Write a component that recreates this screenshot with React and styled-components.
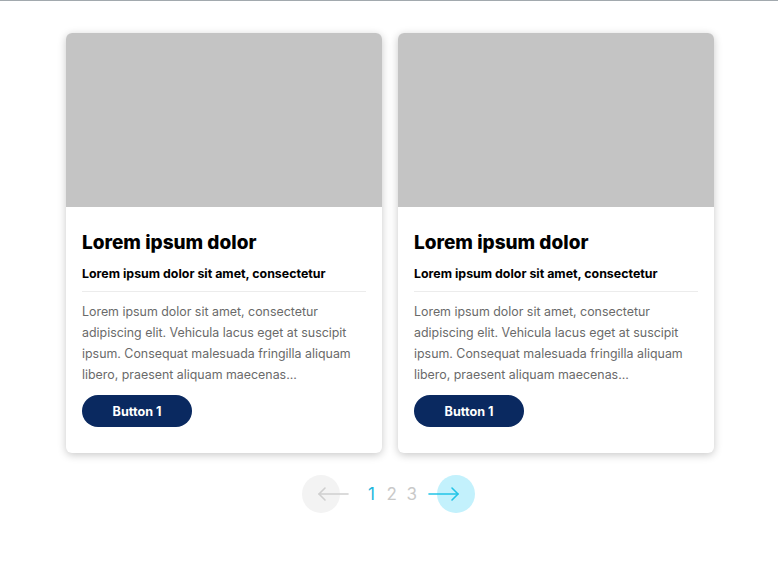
import React from "react";
import styled, { createGlobalStyle } from "styled-components";

const Global = createGlobalStyle`
  html, body { margin: 0; padding: 0; background: #fff; }
  body { font-family: Inter, "Noto Sans", sans-serif; }
`;

const Page = styled.div`
  border-top: 1px solid #a2a9ae;
  padding: 32px 0 0 2px;
  display: flex;
  flex-direction: column;
  align-items: center;
`;

const Cards = styled.div`
  display: flex;
  gap: 16px;
`;

const Card = styled.div`
  width: 316px;
  background: #fff;
  border-radius: 6px;
  overflow: hidden;
  box-shadow: 0 2px 8px rgba(0, 0, 0, 0.22);
  display: flex;
  flex-direction: column;
`;

const Media = styled.div`
  height: 174px;
  background: #c4c4c4;
`;

const Body = styled.div`
  padding: 24px 16px 26px;
  display: flex;
  flex-direction: column;
`;

const Title = styled.h2`
  margin: 0;
  font-size: 19px;
  line-height: 24px;
  font-weight: 800;
  color: #000;
`;

const Subtitle = styled.h3`
  margin: 11px 0 0;
  font-size: 12.4px;
  line-height: 16px;
  font-weight: 700;
  color: #000;
  padding-bottom: 9px;
  border-bottom: 1px solid #ececec;
`;

const Text = styled.p`
  margin: 9px 0 0;
  font-size: 12.4px;
  line-height: 21px;
  color: #6a6a6a;
`;

const Button = styled.button`
  margin-top: 10px;
  width: 110px;
  height: 32px;
  border: none;
  border-radius: 16px;
  background: #0a2960;
  color: #fff;
  font-family: Inter, sans-serif;
  font-weight: 700;
  font-size: 12.6px;
  cursor: pointer;
`;

const Pager = styled.div`
  margin: 22px 0 0 -4px;
  display: flex;
  align-items: center;
  gap: 12px;
`;

const Arrow = styled.button`
  position: relative;
  width: 32px;
  height: 38px;
  padding: 0;
  border: none;
  background: none;
  display: flex;
  align-items: center;
  justify-content: center;
  color: ${(p) => (p.$active ? "#22c3e6" : "#cfcfcf")};
  &::before {
    content: "";
    position: absolute;
    top: 0;
    left: ${(p) => (p.$next ? "9px" : "-15px")};
    width: 38px;
    height: 38px;
    border-radius: 50%;
    background: ${(p) => (p.$active ? "#c3f1fc" : "#f3f3f3")};
  }
  svg { position: relative; }
`;

const Num = styled.span`
  font-size: 17px;
  color: ${(p) => (p.$active ? "#22b5dc" : "#c9c9c9")};
  width: 10px;
  text-align: center;
`;

const Nums = styled.div`
  display: flex;
  gap: 10px;
  margin: 0 -1px 0 6px;
`;

const ArrowIcon = ({ dir }) => (
  <svg width="32" height="16" viewBox="0 0 32 16" fill="none" stroke="currentColor" strokeWidth="1.6" strokeLinecap="round" strokeLinejoin="round">
    {dir === "left" ? (
      <>
        <path d="M31 8H2" />
        <path d="M8 2L2 8l6 6" />
      </>
    ) : (
      <>
        <path d="M1 8h29" />
        <path d="M24 2l6 6-6 6" />
      </>
    )}
  </svg>
);

const text =
  "Lorem ipsum dolor sit amet, consectetur adipiscing elit. Vehicula lacus eget at suscipit ipsum. Consequat malesuada fringilla aliquam libero, praesent aliquam maecenas...";

function ProductCard() {
  return (
    <Card>
      <Media />
      <Body>
        <Title>Lorem ipsum dolor</Title>
        <Subtitle>Lorem ipsum dolor sit amet, consectetur</Subtitle>
        <Text>{text}</Text>
        <Button>Button 1</Button>
      </Body>
    </Card>
  );
}

export default function App() {
  return (
    <Page>
      <Global />
      <Cards>
        <ProductCard />
        <ProductCard />
      </Cards>
      <Pager>
        <Arrow aria-label="previous">
          <ArrowIcon dir="left" />
        </Arrow>
        <Nums>
          <Num $active>1</Num>
          <Num>2</Num>
          <Num>3</Num>
        </Nums>
        <Arrow $next $active aria-label="next">
          <ArrowIcon dir="right" />
        </Arrow>
      </Pager>
    </Page>
  );
}
